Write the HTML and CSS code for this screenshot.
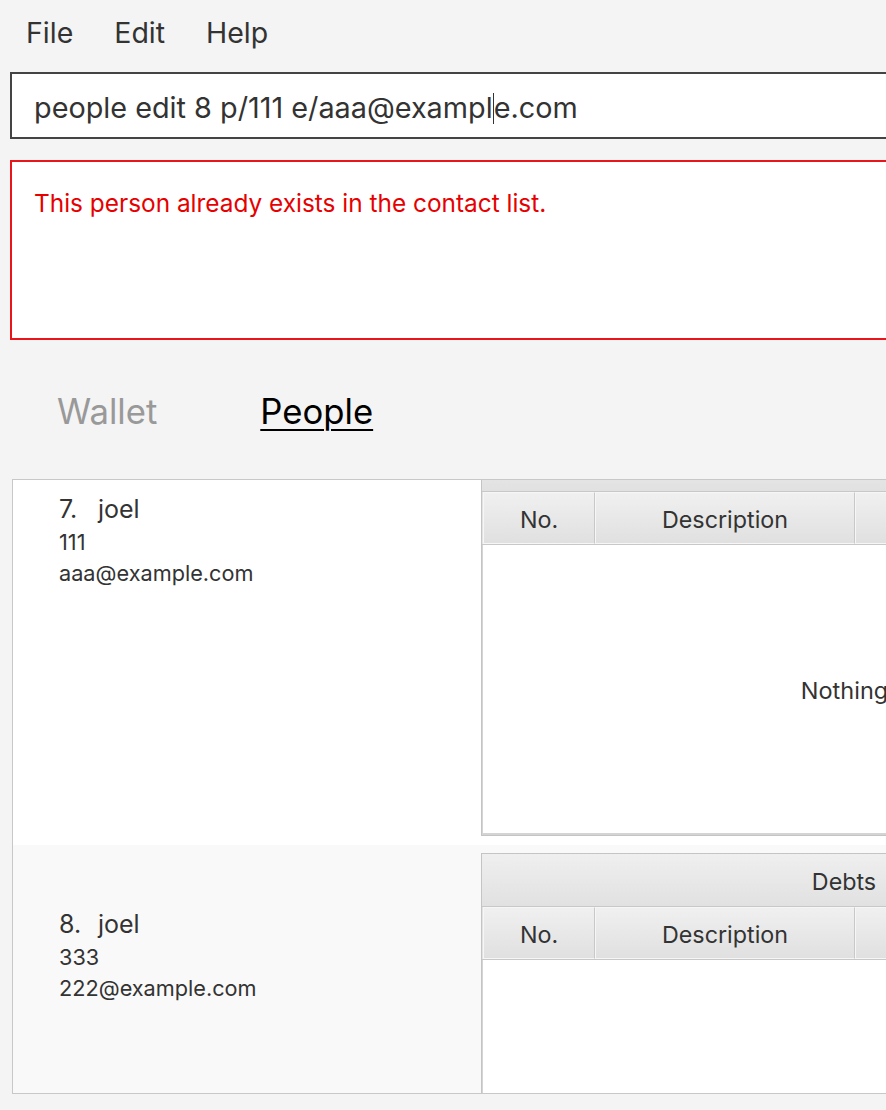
FILE: index.html
```html
<!DOCTYPE html>
<html lang="en">
<head>
<meta charset="utf-8">
<title>People</title>
<link rel="stylesheet" href="styles.css">
</head>
<body>
<div class="app">
  <nav class="menubar">
    <span class="menu-item">File</span>
    <span class="menu-item">Edit</span>
    <span class="menu-item">Help</span>
  </nav>

  <div class="command-box">people edit 8 p/111 e/aaa@exampl<span class="caret"></span>e.com</div>

  <div class="result-box">This person already exists in the contact list.</div>

  <div class="tabs">
    <span class="tab">Wallet</span>
    <span class="tab tab-active">People</span>
  </div>

  <div class="list">
    <div class="list-inner">
      <div class="row row-even">
        <div class="person">
          <div class="person-name"><span class="person-index">7.</span>joel</div>
          <div class="person-detail">111</div>
          <div class="person-detail">aaa@example.com</div>
        </div>
        <div class="table">
          <div class="table-title"></div>
          <div class="table-head">
            <div class="th th-no">No.</div>
            <div class="th th-desc">Description</div>
            <div class="th th-rest"></div>
          </div>
          <div class="table-body">
            <span class="placeholder">Nothing</span>
          </div>
        </div>
      </div>

      <div class="row row-odd">
        <div class="person">
          <div class="person-name"><span class="person-index">8.</span>joel</div>
          <div class="person-detail">333</div>
          <div class="person-detail">222@example.com</div>
        </div>
        <div class="table">
          <div class="table-title">Debts</div>
          <div class="table-head">
            <div class="th th-no">No.</div>
            <div class="th th-desc">Description</div>
            <div class="th th-rest"></div>
          </div>
          <div class="table-body"></div>
        </div>
      </div>
    </div>
  </div>
</div>
</body>
</html>
```

FILE: styles.css
```css
html, body {
  margin: 0;
  padding: 0;
}

body {
  width: 886px;
  height: 1110px;
  overflow: hidden;
  background: #f4f4f4;
  font-family: "Inter", "Liberation Sans", sans-serif;
  color: #333333;
}

.app {
  width: 1250px;
}

/* Menu bar */
.menubar {
  display: flex;
  gap: 41px;
  padding: 16px 0 0 26px;
  height: 34px;
}

.menu-item {
  font-size: 28.5px;
  line-height: 34px;
}

/* Command box */
.command-box {
  margin: 22px 0 0 10px;
  height: 59px;
  padding: 4px 0 0 22px;
  border: 2px solid #444444;
  background: #ffffff;
  font-size: 28.8px;
  line-height: 59px;
  white-space: nowrap;
}

.caret {
  display: inline-block;
  width: 1px;
  height: 31px;
  background: #333333;
  vertical-align: -6px;
}

/* Result box */
.result-box {
  margin: 21px 0 0 10px;
  height: 150px;
  padding: 26px 0 0 22px;
  border: 2px solid #e8161b;
  background: #ffffff;
  color: #e60000;
  font-size: 24.4px;
  line-height: 30px;
}

/* Tabs */
.tabs {
  display: flex;
  gap: 103px;
  margin-top: 51px;
  padding-left: 57px;
}

.tab {
  font-size: 34.7px;
  line-height: 40px;
  color: #999999;
}

.tab-active {
  color: #000000;
  text-decoration: underline;
  text-decoration-thickness: 2px;
  text-underline-offset: 5px;
}

/* List */
.list {
  margin: 48px 0 0 12px;
  height: 613px;
  border: 1px solid #c8c8c8;
  overflow: hidden;
  background: #f4f4f4;
}

.list-inner {
  margin-top: -50px;
}

.row {
  display: flex;
}

.row-even {
  background: #ffffff;
}

.row-odd {
  background: #f9f9f9;
  height: 300px;
}

.person {
  width: 468px;
  flex: none;
  padding: 61px 0 0 46px;
  box-sizing: border-box;
}

.person-name {
  font-size: 25px;
  line-height: 36px;
}

.person-index {
  display: inline-block;
  width: 39px;
}

.person-detail {
  font-size: 21.7px;
  line-height: 31px;
}

/* Debts table */
.table {
  width: 724px;
  flex: none;
  margin: 8px 0 9px 0;
  border: 1px solid #c4c4c4;
  box-shadow: inset 1px 0 0 #dcdcdc;
  display: flex;
  flex-direction: column;
  background: #ffffff;
}

.table-title {
  height: 51px;
  padding-top: 1px;
  border-bottom: 1px solid #c8c8c8;
  background: linear-gradient(#efefef, #e1e1e1);
  text-align: center;
  font-size: 23.3px;
  line-height: 53px;
}

.table-head {
  display: flex;
  height: 52px;
  border-bottom: 1px solid #c8c8c8;
  background: #e2e2e2;
  padding-left: 1px;
}

.th {
  box-sizing: border-box;
  height: 52px;
  padding-top: 3px;
  border: 1px solid #f6f6f6;
  border-right-color: #c8c8c8;
  background: linear-gradient(#f0f0f0, #e0e0e0);
  text-align: center;
  font-size: 23.3px;
  line-height: 48px;
}

.th-no {
  width: 112px;
}

.th-desc {
  width: 260px;
}

.th-rest {
  flex: 1;
}

.table-body {
  height: 288px;
  border-bottom: 2px solid #d4d4d4;
  border-left: 1px solid #d4d4d4;
  display: flex;
  align-items: center;
  justify-content: center;
  font-size: 23.5px;
}

.placeholder {
  padding-top: 2px;
}
```
